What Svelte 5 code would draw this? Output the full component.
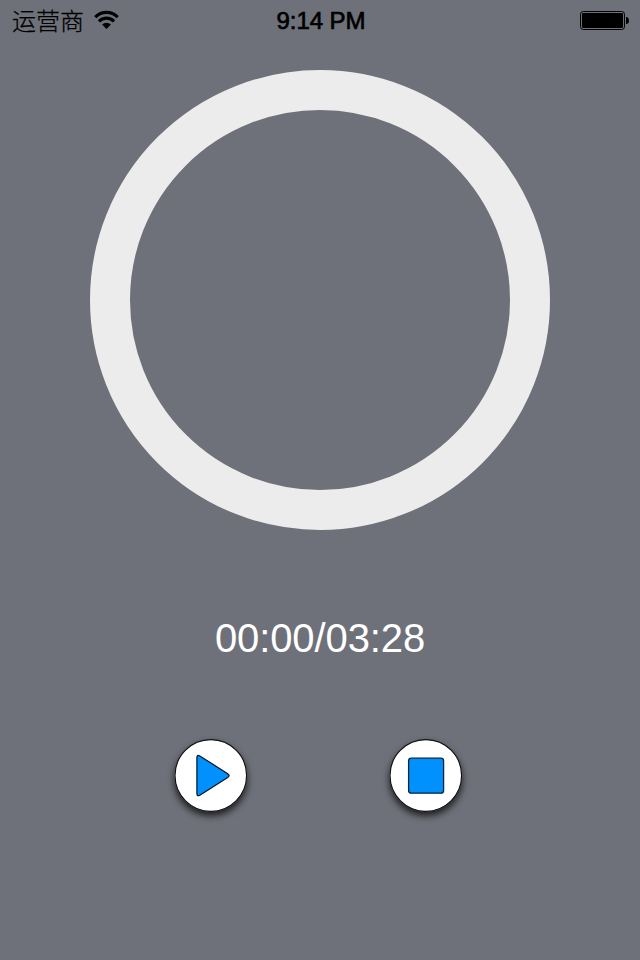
<script>
  let elapsed = $state('00:00');
  const total = '03:28';
</script>

<main class="screen">
  <header class="status">
    <div class="carrier">
      <span class="carrier-name">运营商</span>
      <svg class="wifi" width="25" height="20" viewBox="0 0 26 20" preserveAspectRatio="none" aria-hidden="true">
        <g fill="none" stroke="#000" stroke-width="3.2">
          <path d="M1.3 7.1a16.7 16.7 0 0 1 23.4 0" />
          <path d="M5.1 11.3a11.3 11.3 0 0 1 15.8 0" />
        </g>
        <path d="M8.4 14.6a6.6 6.6 0 0 1 9.2 0L13 19.1z" />
      </svg>
    </div>
    <span class="clock">9:14 PM</span>
    <div class="power">
      <svg width="50" height="19" viewBox="0 0 50 19" aria-hidden="true">
        <rect x="0.5" y="0.5" width="44" height="18" rx="2.8" fill="none" stroke="#000" />
        <rect x="2" y="2" width="41" height="15" rx="1.3" />
        <path d="M46 6h1q2 0.8 2 3.5t-2 3.5h-1z" />
      </svg>
    </div>
  </header>

  <div class="ring" role="progressbar" aria-valuenow="0"></div>

  <div class="time">{elapsed}/{total}</div>

  <div class="controls">
    <button aria-label="Play">
      <svg width="73" height="73" viewBox="0 0 73 73">
        <circle cx="36.5" cy="36.5" r="35.8" fill="#fff" stroke="#111" stroke-width="1.2" />
        <path d="M22.6 18.4Q22.6 15.2 25.5 16.9L53.4 34.7Q56.2 36.6 53.4 38.5L25.5 56.2Q22.6 57.8 22.6 54.8Z" fill="#0091ff" stroke="#06121e" stroke-width="1.2" />
      </svg>
    </button>
    <button aria-label="Stop">
      <svg width="73" height="73" viewBox="0 0 73 73">
        <circle cx="36.5" cy="36.5" r="35.8" fill="#fff" stroke="#111" stroke-width="1.2" />
        <rect x="19.3" y="19.2" width="35" height="35" rx="2.8" fill="#0091ff" stroke="#06263f" stroke-width="1.3" />
      </svg>
    </button>
  </div>
</main>

<style>
  :global(body) {
    margin: 0;
    background: #6e7179;
  }

  .screen {
    box-sizing: border-box;
    width: 640px;
    height: 960px;
    display: flex;
    flex-direction: column;
    align-items: center;
    background: #6e7179;
    overflow: hidden;
    font-family: "Liberation Sans", Arial, "Noto Sans CJK SC", sans-serif;
  }

  .status {
    box-sizing: border-box;
    width: 100%;
    height: 40px;
    padding: 0 10px 0 12px;
    display: grid;
    grid-template-columns: 1fr auto 1fr;
    align-items: center;
    color: #000;
    line-height: 40px;
  }

  .carrier {
    display: flex;
    align-items: center;
    gap: 10px;
  }

  .carrier-name {
    font-family: "Noto Sans CJK SC", sans-serif;
    font-size: 24px;
    font-weight: 300;
    -webkit-text-stroke: 0.25px #000;
  }

  .wifi {
    display: block;
  }

  .clock {
    padding-top: 2px;
    font-size: 24px;
    line-height: 38px;
    letter-spacing: -0.05px;
    -webkit-text-stroke: 0.7px #000;
  }

  .power {
    display: flex;
    justify-content: flex-end;
    padding-top: 1px;
  }

  .ring {
    box-sizing: border-box;
    width: 460px;
    height: 460px;
    margin-top: 30px;
    border: 40px solid #ececec;
    border-radius: 50%;
    flex: none;
  }

  .time {
    margin-top: 85px;
    height: 46px;
    color: #fff;
    font-size: 40px;
    letter-spacing: -0.1px;
    line-height: 46px;
  }

  .controls {
    margin-top: 78px;
    display: flex;
    gap: 141.5px;
    transform: translateX(-1.7px);
  }

  button {
    width: 73px;
    height: 73px;
    padding: 0;
    border: 0;
    border-radius: 50%;
    background: none;
    box-shadow: 0 4px 7px rgba(0, 0, 0, 0.75);
  }

  button svg {
    display: block;
  }
</style>
